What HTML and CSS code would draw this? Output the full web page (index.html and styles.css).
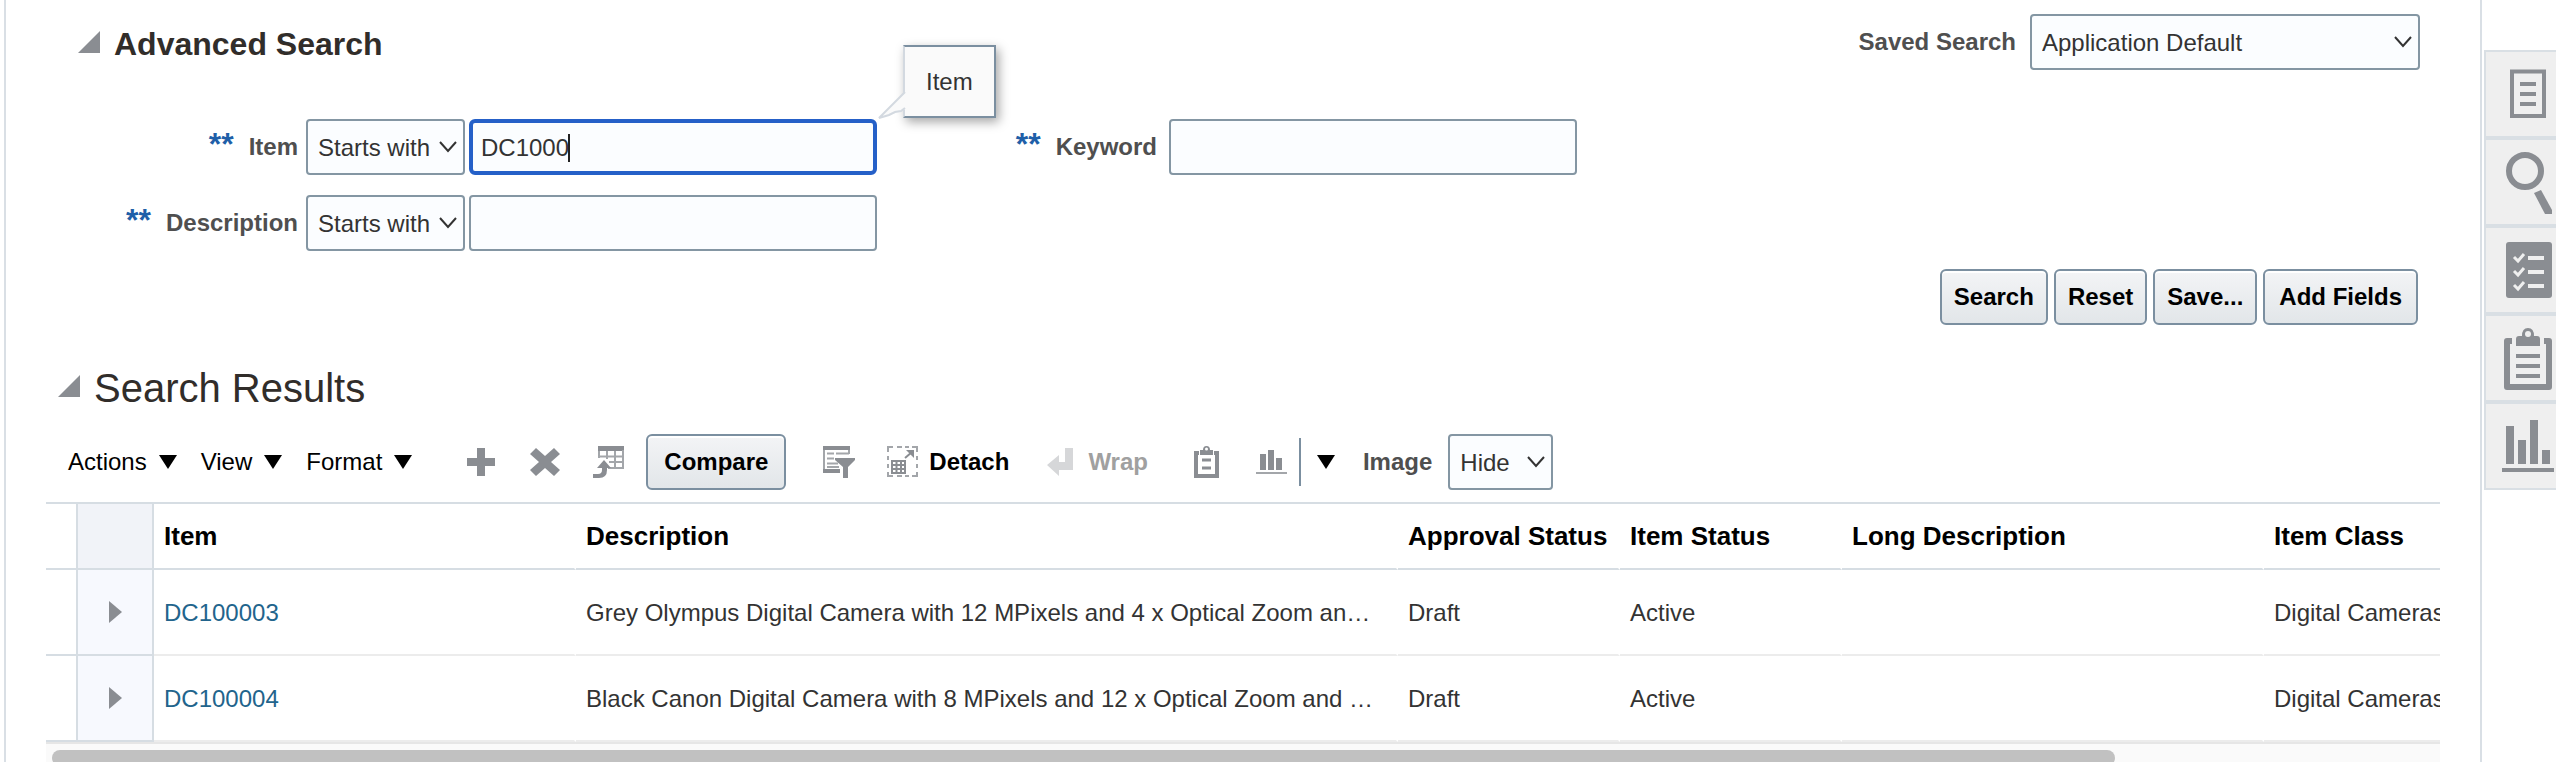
FILE: index.html
```html
<!DOCTYPE html>
<html lang="en">
<head>
<meta charset="utf-8">
<title>Advanced Search</title>
<link rel="stylesheet" href="styles.css">
</head>
<body>
<div class="page">
  <main class="main">
    <section class="search">
      <header class="search-head">
        <h2 class="search-title">
          <svg class="disclosure" width="22" height="22" viewBox="0 0 22 22" aria-hidden="true"><path d="M22 0V22H0Z" fill="#8a8d92"/></svg>
          Advanced Search
        </h2>
        <div class="saved">
          <label class="label" for="saved">Saved Search</label>
          <div class="select select-saved">
            <select id="saved"><option>Application Default</option></select>
            <svg class="chevron" width="18" height="12" viewBox="0 0 18 12" aria-hidden="true"><path d="M1 1L9 10L17 1"/></svg>
          </div>
        </div>
      </header>

      <form class="fields">
        <label class="label field-label" for="item"><span class="req">**</span>Item</label>
        <div class="field">
          <div class="select select-op">
            <select aria-label="Item operator"><option>Starts with</option></select>
            <svg class="chevron" width="18" height="12" viewBox="0 0 18 12" aria-hidden="true"><path d="M1 1L9 10L17 1"/></svg>
          </div>
          <div class="input-wrap">
            <input class="input input-active" id="item" type="text" value="DC1000">
            <span class="caret"></span>
            <div class="tip" role="tooltip">Item
              <svg class="tip-tail" width="30" height="30" viewBox="0 0 30 30" aria-hidden="true"><path d="M29 2L2 28L18 22L24 21L29 19Z" fill="#fafafa"/><path d="M28 2L2 28L12 25L18 22L24 21L28 18" fill="none" stroke="#d3d9e0" stroke-width="2"/></svg>
            </div>
          </div>
        </div>
        <label class="label field-label field-label-wide" for="keyword"><span class="req">**</span>Keyword</label>
        <input class="input" id="keyword" type="text">

        <label class="label field-label" for="desc"><span class="req">**</span>Description</label>
        <div class="field">
          <div class="select select-op">
            <select aria-label="Description operator"><option>Starts with</option></select>
            <svg class="chevron" width="18" height="12" viewBox="0 0 18 12" aria-hidden="true"><path d="M1 1L9 10L17 1"/></svg>
          </div>
          <input class="input" id="desc" type="text">
        </div>
      </form>

      <div class="buttons">
        <button class="btn" type="button">Search</button>
        <button class="btn" type="button">Reset</button>
        <button class="btn" type="button">Save...</button>
        <button class="btn btn-wide" type="button">Add Fields</button>
      </div>
    </section>

    <section class="results">
      <h1 class="results-title">
        <svg class="disclosure" width="22" height="22" viewBox="0 0 22 22" aria-hidden="true"><path d="M22 0V22H0Z" fill="#8a8d92"/></svg>
        Search Results
      </h1>

      <div class="toolbar">
        <div class="menus">
          <button class="menu" type="button">Actions<svg width="18" height="14" viewBox="0 0 18 14" aria-hidden="true"><path d="M0 0H18L9 14Z"/></svg></button>
          <button class="menu" type="button">View<svg width="18" height="14" viewBox="0 0 18 14" aria-hidden="true"><path d="M0 0H18L9 14Z"/></svg></button>
          <button class="menu" type="button">Format<svg width="18" height="14" viewBox="0 0 18 14" aria-hidden="true"><path d="M0 0H18L9 14Z"/></svg></button>
        </div>
        <div class="tools">
          <button class="tool" type="button" aria-label="Create"><svg width="32" height="32" viewBox="0 0 32 32" fill="#8a8d92"><path d="M12 2h8v10h10v8H20v10h-8V20H2v-8h10z"/></svg></button>
          <button class="tool" type="button" aria-label="Delete"><svg width="32" height="32" viewBox="0 0 32 32" fill="#8a8d92"><path d="M7 2L16 10L25 2L31 8L22 16L31 24L25 30L16 22L7 30L1 24L10 16L1 8Z"/></svg></button>
          <button class="tool" type="button" aria-label="Add to spreadsheet"><svg width="32" height="32" viewBox="0 0 32 32"><path d="M5 0H31V5H5Z" fill="#8a8d92"/><path d="M6 5V12M30 4V22H15M14 5V13M22 5V22M6 10.500H30M16 16H30" fill="none" stroke="#a3a6aa" stroke-width="2"/><path d="M11 14L18 22H14V24Q14 32 6 32H0V28H5Q9 28 9 24V22H4Z" fill="#8a8d92"/></svg></button>
        </div>
        <button class="btn btn-compare" type="button">Compare</button>
        <div class="tools">
          <button class="tool" type="button" aria-label="Query by example"><svg width="32" height="32" viewBox="0 0 32 32"><path d="M0 0H27V4H0Z" fill="#8a8d92"/><path d="M1 4V24M26 4V8M4 7.500H11M13 7.500H26M4 12.500H11M4 17.500H15M4 21H16" fill="none" stroke="#a3a6aa" stroke-width="2"/><path d="M0 23H17V27H0ZM12 12H32V14L25 21V32H20V21L12 14Z" fill="#8a8d92"/></svg></button>
          <button class="tool tool-text" type="button"><svg width="32" height="32" viewBox="0 0 32 32" aria-hidden="true"><path d="M1 6V1H6M10 1H15M18 1H22M25 1H30V6M30 10V14M30 18V22M30 26V30H25M22 30H18M15 30H10M6 30H1V26M1 22V18M1 14V10" fill="none" stroke="#a3a6aa" stroke-width="2"/><path d="M5 15H18V27H5Z M5 19H18M5 23H18M9.500 16V27M14 16V27M18 12L25 6" fill="none" stroke="#8a8d92" stroke-width="2"/><path d="M19 4H27V12Z" fill="#8a8d92"/></svg>Detach</button>
        </div>
        <button class="tool tool-text tool-wrap" type="button" disabled><svg width="32" height="32" viewBox="0 0 32 32" aria-hidden="true"><path d="M19 2H27V24H13V30L1 19L13 9V16H19Z" fill="#d6d7d9"/></svg>Wrap</button>
        <div class="tools">
          <button class="tool" type="button" aria-label="Paste"><svg width="32" height="32" viewBox="0 0 32 32"><path d="M7 7H4V30H25V7H22" fill="none" stroke="#8a8d92" stroke-width="4"/><path d="M8 4H11Q11 0 14.500 0Q18 0 18 4H21V9H8Z" fill="#8a8d92"/><circle cx="14.500" cy="3" r="1.500" fill="#fff"/><path d="M10 14H19M10 22H19" stroke="#8a8d92" stroke-width="3"/></svg></button>
          <button class="tool" type="button" aria-label="Analytics"><svg width="32" height="32" viewBox="0 0 32 32"><path d="M4 8H10V24H4ZM12 4H18V24H12ZM20 12H26V24H20Z" fill="#8a8d92"/><path d="M0 27H31" stroke="#a3a6aa" stroke-width="2"/></svg></button>
        </div>
        <span class="sep"></span>
        <button class="menu" type="button" aria-label="More"><svg width="18" height="14" viewBox="0 0 18 14"><path d="M0 0H18L9 14Z"/></svg></button>
        <label class="label label-image" for="image">Image</label>
        <div class="select select-image">
          <select id="image"><option>Hide</option></select>
          <svg class="chevron" width="18" height="12" viewBox="0 0 18 12" aria-hidden="true"><path d="M1 1L9 10L17 1"/></svg>
        </div>
      </div>

      <div class="grid">
        <table class="table">
          <colgroup><col class="c-mark"><col class="c-exp"><col class="c-item"><col class="c-desc"><col class="c-status"><col class="c-status"><col class="c-item"><col class="c-item"></colgroup>
          <thead>
            <tr><th class="mark"></th><th class="exp"></th><th>Item</th><th>Description</th><th>Approval Status</th><th>Item Status</th><th>Long Description</th><th>Item Class</th></tr>
          </thead>
          <tbody>
            <tr><td class="mark"></td><td class="exp"><button class="expand" type="button" aria-label="Expand"><svg width="13" height="22" viewBox="0 0 13 22"><path d="M0 0L13 11L0 22Z" fill="#8a8d92"/></svg></button></td><td><a class="link" href="#">DC100003</a></td><td>Grey Olympus Digital Camera with 12 MPixels and 4 x Optical Zoom an…</td><td>Draft</td><td>Active</td><td></td><td>Digital Cameras</td></tr>
            <tr><td class="mark"></td><td class="exp"><button class="expand" type="button" aria-label="Expand"><svg width="13" height="22" viewBox="0 0 13 22"><path d="M0 0L13 11L0 22Z" fill="#8a8d92"/></svg></button></td><td><a class="link" href="#">DC100004</a></td><td>Black Canon Digital Camera with 8 MPixels and 12 x Optical Zoom and …</td><td>Draft</td><td>Active</td><td></td><td>Digital Cameras</td></tr>
          </tbody>
        </table>
        <div class="scroll"><div class="thumb"></div></div>
      </div>
    </section>
  </main>

  <nav class="rail">
    <button class="tab" type="button" aria-label="Details"><svg width="70" height="84" viewBox="0 0 70 84"><path d="M26 19.500H58V64H26Z" fill="none" stroke="#8a8d92" stroke-width="4"/><path d="M34 32H50M34 42H50M34 52H50" stroke="#8a8d92" stroke-width="4"/></svg></button>
    <button class="tab" type="button" aria-label="Search"><svg width="70" height="84" viewBox="0 0 70 84"><circle cx="39" cy="31" r="16" fill="none" stroke="#8a8d92" stroke-width="6"/><path d="M48 53L55 50L66 70V74H59Z" fill="#8a8d92"/></svg></button>
    <button class="tab" type="button" aria-label="Tasks"><svg width="70" height="84" viewBox="0 0 70 84"><rect x="20" y="14" width="46" height="56" rx="3" fill="#8a8d92"/><path d="M42 30H58M42 44H58M42 58H58" stroke="#efefef" stroke-width="4"/><path d="M28 29L32 33L38 26M28 43L32 47L38 40M28 57L32 61L38 54" fill="none" stroke="#efefef" stroke-width="3"/></svg></button>
    <button class="tab" type="button" aria-label="Clipboard"><svg width="70" height="84" viewBox="0 0 70 84"><path d="M26 25H21V71H63V25H58" fill="none" stroke="#8a8d92" stroke-width="6" stroke-linejoin="round"/><path d="M30 30V23Q30 20 33 20H36Q36 12 42 12Q48 12 48 20H51Q54 20 54 23V30Z" fill="#8a8d92"/><circle cx="42" cy="18" r="3" fill="#efefef"/><path d="M30 40H54M30 50H54M30 60H54" stroke="#8a8d92" stroke-width="4"/></svg></button>
    <button class="tab" type="button" aria-label="Analytics"><svg width="70" height="84" viewBox="0 0 70 84"><path d="M20 22H28V60H20ZM32 36H40V60H32ZM44 16H52V60H44ZM56 46H64V60H56ZM16 64H68V68H16Z" fill="#8a8d92"/></svg></button>
  </nav>
</div>
</body>
</html>
```
FILE: styles.css
```css
* {
  box-sizing: border-box;
}

body {
  margin: 0;
  background: #fff;
  color: #333;
  font: 24px "Liberation Sans", Arial, sans-serif;
}

button,
input,
select {
  font: inherit;
  color: inherit;
}

svg {
  display: block;
  flex: none;
}

.page {
  display: flex;
  height: 100vh;
  padding-left: 4px;
  overflow: hidden;
}

.main {
  flex: 1;
  min-width: 0;
  border: solid #d9dfe5;
  border-width: 0 2px;
  padding: 14px 40px 0;
}

/* Search panel */
.search {
  padding: 0 20px 0 32px;
}

.search-head {
  display: flex;
  justify-content: space-between;
}

.search-title {
  display: flex;
  align-items: center;
  gap: 14px;
  margin: 0;
  padding-top: 4px;
  font-size: 32px;
  color: #312d2a;
}

.disclosure {
  margin-bottom: 4px;
}

.saved {
  display: flex;
  align-items: center;
  gap: 14px;
}

.label {
  font-weight: bold;
  color: #4f4f4f;
}

.select {
  display: grid;
  flex: none;
  align-items: center;
}

.select select,
.select .chevron {
  grid-area: 1 / 1;
}

.select select {
  appearance: none;
  width: 100%;
  height: 56px;
  padding: 0 10px;
  border: 2px solid #8496a3;
  border-radius: 4px;
  background: #fbfdff;
}

.chevron {
  justify-self: end;
  margin-right: 8px;
  fill: none;
  stroke: #333;
  stroke-width: 2;
  pointer-events: none;
}

.select-saved {
  width: 390px;
}

.select-op {
  width: 159px;
}

.select-image {
  width: 105px;
}

.fields {
  display: grid;
  grid-template-columns: 220px 579px 292px 408px;
  row-gap: 20px;
  align-items: center;
  margin-top: 49px;
}

.field-label {
  display: flex;
  justify-content: flex-end;
  align-items: baseline;
  gap: 15px;
}

.field-label-wide {
  padding-right: 12px;
}

.req {
  font-size: 32px;
  line-height: 20px;
  color: #1f5fa8;
}

.field {
  display: flex;
  gap: 4px;
  padding-left: 8px;
}

.input-wrap {
  position: relative;
  flex: none;
}

.input {
  width: 408px;
  height: 56px;
  padding: 2px 10px 0;
  border: 2px solid #8496a3;
  border-radius: 4px;
  background: #fbfdff;
}

.input-active {
  padding: 2px 8px 0;
  border: 4px solid #2560c8;
  border-radius: 6px;
}

.caret {
  position: absolute;
  top: 15px;
  left: 99px;
  width: 2px;
  height: 28px;
  background: #222;
}

.tip {
  position: absolute;
  top: -74px;
  left: 434px;
  padding: 20px 21px;
  border: 2px solid #7b8fa0;
  border-left-color: #d3d9e0;
  background: #fafafa;
  box-shadow: 3px 4px 10px rgba(0, 0, 0, 0.35);
  line-height: 29px;
}

.tip-tail {
  position: absolute;
  left: -28px;
  bottom: -4px;
}

.buttons {
  display: flex;
  justify-content: flex-end;
  gap: 6px;
  margin-top: 18px;
  padding-right: 2px;
}

.btn {
  height: 56px;
  padding: 0 12px;
  border: 2px solid #7b8fa0;
  border-radius: 6px;
  background: linear-gradient(#f3f4f6, #e2e6e9);
  box-shadow: inset 0 2px 0 #fff;
  font-weight: bold;
  color: #000;
}

.btn-wide {
  padding: 0 14px;
}

.btn-compare {
  margin: 0 37px 0 21px;
  padding: 0 16px;
}

/* Results */
.results-title {
  display: flex;
  align-items: center;
  gap: 14px;
  margin: 40px 0 0;
  padding-left: 12px;
  font-size: 40px;
  font-weight: normal;
  line-height: 46px;
  color: #312d2a;
}

.toolbar {
  display: flex;
  align-items: center;
  margin: 23px 0 12px;
  padding-left: 22px;
}

.menus {
  display: flex;
  gap: 24px;
  margin-right: 53px;
}

.menu,
.tool,
.expand {
  padding: 0;
  border: 0;
  background: none;
}

.menu {
  display: flex;
  align-items: center;
  gap: 12px;
  color: #000;
}

.tools {
  display: flex;
  gap: 32px;
}

.tool-text {
  display: flex;
  align-items: center;
  gap: 10px;
  font-weight: bold;
  color: #000;
}

.tool-wrap {
  margin: 0 44px 0 37px;
  color: #a0a0a0;
}

.sep {
  width: 2px;
  height: 48px;
  margin: 0 16px 0 11px;
  background: #7b8fa0;
}

.label-image {
  margin: 0 16px 0 28px;
}

.grid {
  overflow: hidden;
  border-top: 2px solid #d6dde3;
}

.table {
  width: 2640px;
  table-layout: fixed;
  border-collapse: separate;
  border-spacing: 0;
}

.c-mark {
  width: 32px;
}

.c-exp {
  width: 76px;
}

.c-item {
  width: 422px;
}

.c-desc {
  width: 822px;
}

.c-status {
  width: 222px;
}

.table th,
.table td {
  padding: 0 0 0 10px;
  border-right: 2px solid #fff;
  text-align: left;
  white-space: nowrap;
}

.table th {
  height: 66px;
  border-bottom: 2px solid #d6dde3;
  font-size: 26px;
  color: #000;
}

.table td {
  height: 86px;
  padding-top: 2px;
  border-bottom: 2px solid #ececec;
}

.table .mark,
.table .exp {
  padding: 0;
  border-color: #d6dde3;
}

.table .exp {
  background: #f7f9fe;
}

.table th.exp {
  background: #f1f3f8;
}

.expand {
  display: block;
  margin: 0 auto;
}

.link {
  color: #22648c;
  text-decoration: none;
}

.scroll {
  height: 30px;
  padding: 6px;
  border-top: 2px solid #e6e6e6;
  background: #fafafa;
}

.thumb {
  width: 86.6%;
  height: 16px;
  border-radius: 8px;
  background: #c1c1c1;
}

/* Side tabs */
.rail {
  flex: none;
  width: 74px;
  padding: 50px 0 0 2px;
}

.tab {
  display: block;
  width: 72px;
  height: 88px;
  padding: 0;
  border: 2px solid #d9dfe4;
  border-right: 0;
  background: #efefef;
}
```
